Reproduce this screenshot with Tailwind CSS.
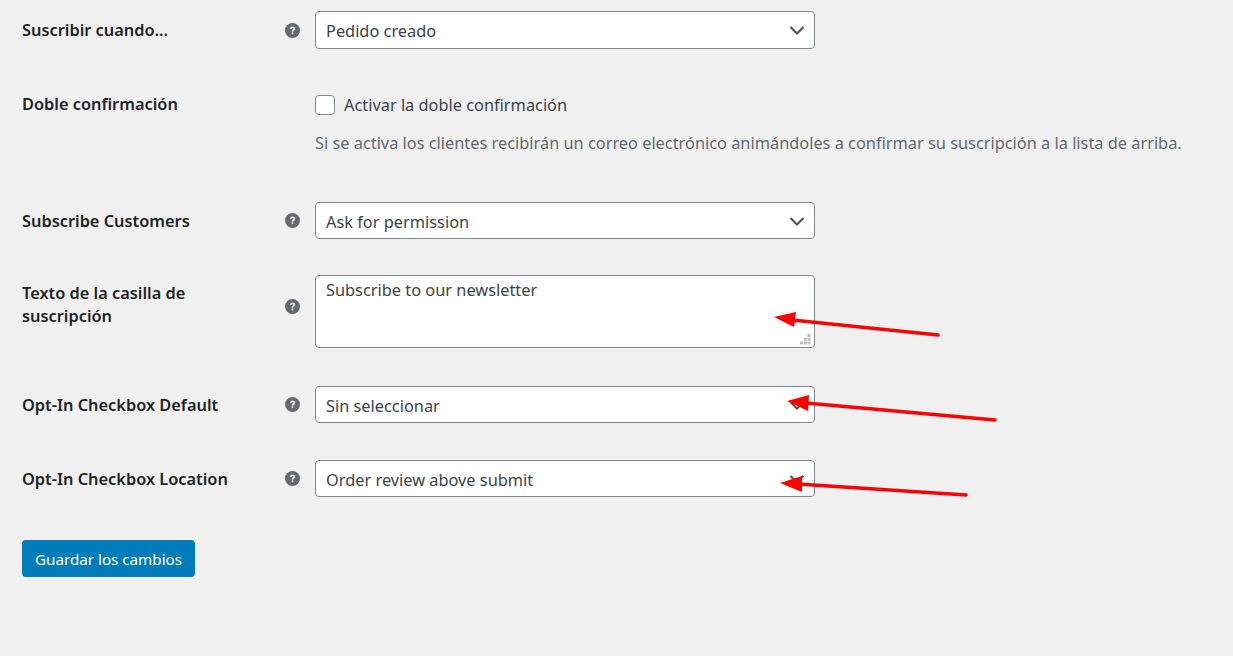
<!DOCTYPE html>
<html lang="es">
<head>
  <meta charset="UTF-8">
  <title>Ajustes</title>
  <script src="https://cdn.jsdelivr.net/npm/@tailwindcss/browser@4"></script>
</head>
<body class="relative h-[656px] overflow-hidden bg-[#f0f0f1] font-['Noto_Sans',sans-serif] text-[16.35px] text-[#3c434a]">
  <div class="pl-[22px] pt-[11px]">

    <!-- Suscribir cuando -->
    <div class="flex h-[38px] items-center">
      <div class="w-[263px] font-semibold text-[#1d2327]">Suscribir cuando...</div>
      <svg class="mr-[15px] h-[15px] w-[15px] text-[#646970]" viewBox="0 0 16 16"><circle cx="8" cy="8" r="8" fill="currentColor"/><path d="M5.3 6.2c.1-1.5 1.2-2.4 2.800-2.400s2.700.9 2.700 2.200c0 2-2 1.800-2 3.300H7.100c0-2.300 1.700-2.200 1.700-3.200 0-.5-.3-.7-.8-.7-.6 0-.9.3-1 .9zM7.100 10.100h1.800v1.900H7.100z" fill="#f0f0f1"/></svg>
      <div class="flex h-[38px] w-[500px] items-center justify-between rounded-[4px] border border-[#7e8993] bg-white pl-[10px] pr-[9px]">
        <span class="pt-[2px]">Pedido creado</span>
        <svg class="h-3 w-4 text-[#50575e]" viewBox="0 0 16 12" fill="none"><path d="M1.5 3l6.500 6.500L14.500 3" stroke="currentColor" stroke-width="2.200"/></svg>
      </div>
    </div>

    <!-- Doble confirmacion -->
    <div class="mt-[46px] flex">
      <div class="mt-[-1px] w-[293px] font-semibold leading-[20px] text-[#1d2327]">Doble confirmación</div>
      <div>
        <label class="flex items-center">
          <span class="mr-[9px] h-[20px] w-[20px] rounded-[4px] border border-[#7e8993] bg-white"></span>
          <span class="leading-[20px]">Activar la doble confirmación</span>
        </label>
        <p class="mt-[17px] leading-[22px] text-[#646970]">Si se activa los clientes recibirán un correo electrónico animándoles a confirmar su suscripción a la lista de arriba.</p>
      </div>
    </div>

    <!-- Subscribe Customers -->
    <div class="mt-[48px] flex h-[37px] items-center">
      <div class="w-[263px] pt-[2px] font-semibold text-[#1d2327]">Subscribe Customers</div>
      <svg class="mr-[15px] h-[15px] w-[15px] text-[#646970]" viewBox="0 0 16 16"><circle cx="8" cy="8" r="8" fill="currentColor"/><path d="M5.3 6.2c.1-1.5 1.2-2.4 2.800-2.400s2.700.9 2.700 2.200c0 2-2 1.800-2 3.300H7.100c0-2.300 1.700-2.200 1.700-3.200 0-.5-.3-.7-.8-.7-.6 0-.9.3-1 .9zM7.100 10.100h1.800v1.900H7.100z" fill="#f0f0f1"/></svg>
      <div class="flex h-[37px] w-[500px] items-center justify-between rounded-[4px] border border-[#7e8993] bg-white pl-[10px] pr-[9px]">
        <span class="pt-[4px]">Ask for permission</span>
        <svg class="h-3 w-4 text-[#50575e]" viewBox="0 0 16 12" fill="none"><path d="M1.5 3l6.500 6.500L14.500 3" stroke="currentColor" stroke-width="2.200"/></svg>
      </div>
    </div>

    <!-- Texto de la casilla -->
    <div class="mt-[36px] flex h-[73px]">
      <div class="mt-[7px] w-[263px] font-semibold leading-[23px] text-[#1d2327]">Texto de la casilla de<br>suscripción</div>
      <svg class="mr-[15px] mt-[24px] h-[15px] w-[15px] text-[#646970]" viewBox="0 0 16 16"><circle cx="8" cy="8" r="8" fill="currentColor"/><path d="M5.3 6.2c.1-1.5 1.2-2.4 2.800-2.400s2.700.9 2.700 2.200c0 2-2 1.800-2 3.300H7.100c0-2.300 1.700-2.200 1.700-3.200 0-.5-.3-.7-.8-.7-.6 0-.9.3-1 .9zM7.100 10.100h1.800v1.900H7.100z" fill="#f0f0f1"/></svg>
      <div class="relative h-[73px] w-[500px] rounded-[4px] border border-[#7e8993] bg-white pl-[10px] pt-[2px]">
        <span>Subscribe to our newsletter</span>
        <svg class="absolute bottom-[2px] right-[3px] h-[11px] w-[11px]" viewBox="0 0 11 11" fill="#bdbdbd"><rect x="7.500" y="0" width="3" height="3"/><rect x="3.800" y="3.800" width="3" height="3"/><rect x="7.500" y="3.800" width="3" height="3"/><rect x="0" y="7.500" width="3" height="3"/><rect x="3.800" y="7.500" width="3" height="3"/><rect x="7.500" y="7.500" width="3" height="3"/></svg>
      </div>
    </div>

    <!-- Opt-In Checkbox Default -->
    <div class="mt-[38px] flex h-[37px] items-center">
      <div class="w-[263px] pt-[2px] font-semibold text-[#1d2327]">Opt-In Checkbox Default</div>
      <svg class="mr-[15px] h-[15px] w-[15px] text-[#646970]" viewBox="0 0 16 16"><circle cx="8" cy="8" r="8" fill="currentColor"/><path d="M5.3 6.2c.1-1.5 1.2-2.4 2.800-2.400s2.700.9 2.700 2.200c0 2-2 1.800-2 3.300H7.100c0-2.300 1.700-2.200 1.700-3.200 0-.5-.3-.7-.8-.7-.6 0-.9.3-1 .9zM7.100 10.100h1.800v1.900H7.100z" fill="#f0f0f1"/></svg>
      <div class="flex h-[37px] w-[500px] items-center justify-between rounded-[4px] border border-[#7e8993] bg-white pl-[10px] pr-[9px]">
        <span class="pt-[4px]">Sin seleccionar</span>
        <svg class="h-3 w-4 text-[#50575e]" viewBox="0 0 16 12" fill="none"><path d="M1.5 3l6.500 6.500L14.500 3" stroke="currentColor" stroke-width="2.200"/></svg>
      </div>
    </div>

    <!-- Opt-In Checkbox Location -->
    <div class="mt-[37px] flex h-[37px] items-center">
      <div class="w-[263px] pt-[2px] font-semibold text-[#1d2327]">Opt-In Checkbox Location</div>
      <svg class="mr-[15px] h-[15px] w-[15px] text-[#646970]" viewBox="0 0 16 16"><circle cx="8" cy="8" r="8" fill="currentColor"/><path d="M5.3 6.2c.1-1.5 1.2-2.4 2.800-2.400s2.700.9 2.700 2.200c0 2-2 1.800-2 3.300H7.100c0-2.300 1.700-2.200 1.700-3.200 0-.5-.3-.7-.8-.7-.6 0-.9.3-1 .9zM7.100 10.100h1.800v1.900H7.100z" fill="#f0f0f1"/></svg>
      <div class="flex h-[37px] w-[500px] items-center justify-between rounded-[4px] border border-[#7e8993] bg-white pl-[10px] pr-[9px]">
        <span class="pt-[4px]">Order review above submit</span>
        <svg class="h-3 w-4 text-[#50575e]" viewBox="0 0 16 12" fill="none"><path d="M1.5 3l6.500 6.500L14.500 3" stroke="currentColor" stroke-width="2.200"/></svg>
      </div>
    </div>

    <button class="mt-[43px] h-[37px] w-[173px] rounded-[4px] bg-[#007cba] pt-[1px] text-[15.2px] text-white">Guardar los cambios</button>
  </div>

  <!-- red annotation arrows -->
  <svg class="absolute left-0 top-0 h-[656px] w-[1233px]" viewBox="0 0 1233 656" fill="none">
    <path d="M938 335L792 320" stroke="#ff0000" stroke-width="3.500" stroke-linecap="round"/>
    <path d="M774 317L796 312L794 327z" fill="#ff0000"/>
    <path d="M995 420L806 403" stroke="#ff0000" stroke-width="3.500" stroke-linecap="round"/>
    <path d="M787 401L809 395L808 411z" fill="#ff0000"/>
    <path d="M966 495L798 484" stroke="#ff0000" stroke-width="3.500" stroke-linecap="round"/>
    <path d="M780 483L802 476L802 492z" fill="#ff0000"/>
  </svg>
</body>
</html>
